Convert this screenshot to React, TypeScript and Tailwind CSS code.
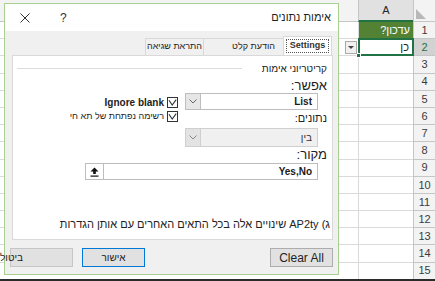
import React from 'react'

const rowNums = Array.from({ length: 15 }, (_, i) => i + 1)

function CheckBox() {
  return (
    <svg width="11" height="11" viewBox="0 0 11 11" className="shrink-0">
      <rect x="0.5" y="0.5" width="10" height="10" fill="#fff" stroke="#333" />
      <path d="M2 3.2 L5.2 8 L9.2 2.6" fill="none" stroke="#333" strokeWidth="1.1" />
    </svg>
  )
}

function Chevron({ color = '#666' }: { color?: string }) {
  return (
    <svg width="8" height="5" viewBox="0 0 8 5">
      <path d="M0.5 0.5 L4 4 L7.5 0.5" fill="none" stroke={color} strokeWidth="1" />
    </svg>
  )
}

export default function App() {
  return (
    <div
      dir="rtl"
      className="relative w-[435px] h-[281px] overflow-hidden bg-white border-b-2 border-[#2b2b2b] font-['Liberation_Sans','DejaVu_Sans',sans-serif] text-[#1a1a1a]"
    >
      {/* גיליון */}
      <div className="flex flex-col">
        <div className="flex h-[22px]">
          <div className="w-[22px] shrink-0 bg-[#f3f3f3] border-l border-b border-[#c6c6c6] flex items-end justify-end pb-[2px] pl-[2px]">
            <svg width="10" height="10" viewBox="0 0 10 10">
              <polygon points="0,0 0,10 10,10" fill="#b8b8b8" />
            </svg>
          </div>
          <div className="w-[55px] shrink-0 bg-[#e1e1e1] border-l border-[#c6c6c6] border-b-2 border-b-[#217346] flex items-center justify-center text-[11px] text-[#262626]">
            A
          </div>
          <div className="flex-1 bg-[#f3f3f3] border-b border-[#c6c6c6]" />
        </div>
        {rowNums.map(n => (
          <div key={n} className="flex h-[17.2px]">
            <div
              className={`w-[22px] shrink-0 border-l border-b border-[#c6c6c6] flex items-center justify-center text-[11px] ${
                n === 2 ? 'bg-[#d2d2d2] text-[#217346]' : 'bg-[#f3f3f3] text-[#3b3b3b]'
              }`}
            >
              {n}
            </div>
            {n === 1 ? (
              <div className="w-[55px] shrink-0 bg-[#548235] border-l border-b border-[#dadada] flex items-center pr-[3px] text-[11px] text-white">
                עדכון?
              </div>
            ) : n === 2 ? (
              <div className="relative w-[55px] shrink-0 border-l border-b border-[#dadada] flex items-center pr-[4px] text-[11px]">
                כן
                <div className="absolute -inset-[1px] border-2 border-[#217346]" />
                <div className="absolute -bottom-[3px] -left-[3px] w-[5px] h-[5px] bg-[#217346] border border-white" />
                <div className="absolute top-[2px] right-[calc(100%+2px)] w-[12px] h-[13px] bg-[#f0f0f0] border border-[#ababab] flex items-center justify-center">
                  <svg width="6" height="3" viewBox="0 0 6 3">
                    <polygon points="0,0 6,0 3,3" fill="#444" />
                  </svg>
                </div>
              </div>
            ) : (
              <div className="w-[55px] shrink-0 border-l border-b border-[#dadada]" />
            )}
            <div className="flex-1 border-b border-[#dadada]" />
          </div>
        ))}
      </div>

      {/* חלון אימות נתונים */}
      <div className="absolute left-[4px] top-[3px] w-[335px] h-[272px] border border-[#a9d08e] bg-[#f0f0f0] flex flex-col">
        <div className="h-[27px] shrink-0 bg-white flex items-center pr-[7px] pl-[15px]">
          <span className="text-[11px] text-[#222]">אימות נתונים</span>
          <span className="mr-auto ml-[30px] text-[12px] text-[#333]">?</span>
          <svg width="10" height="10" viewBox="0 0 10 10">
            <path d="M0.5 0.5 L9.5 9.5 M9.5 0.5 L0.5 9.5" stroke="#333" strokeWidth="1" />
          </svg>
        </div>

        <div className="h-[24px] shrink-0 flex items-end pr-[6px]">
          <div className="w-[49px] h-[19px] bg-white border border-b-0 border-[#d9d9d9] flex items-center justify-center p-[2px]">
            <span className="w-full h-full border border-dotted border-[#555] flex items-center justify-center text-[9px] font-bold text-[#333]">
              Settings
            </span>
          </div>
          <div className="w-[80px] h-[17px] border-t border-l border-[#d9d9d9] flex items-center pr-[8px] text-[9px] text-[#222]">
            הודעת קלט
          </div>
          <div className="w-[58px] h-[17px] border-t border-l border-[#d9d9d9] flex items-center justify-center text-[9px] text-[#222]">
            התראת שגיאה
          </div>
        </div>

        <div className="h-[185px] shrink-0 mr-[5px] ml-[7px] bg-white border border-[#d9d9d9] flex flex-col pt-[6px] pr-[5px] pl-[4px]">
          <div className="flex items-center h-[12px]">
            <span className="text-[10px] text-[#222]">קריטריוני אימות</span>
            <div className="flex-1 h-px bg-[#dcdcdc] mr-[20px]" />
          </div>

          <div className="flex gap-[7px] mt-[5px]">
            <div className="w-[142px] shrink-0 flex flex-col">
              <div className="h-[14px] leading-[14px] text-[13px] text-[#222]">אפשר:</div>
              <div className="mr-[9px] h-[17px] bg-white border border-[#bdbdbd] flex items-center">
                <span className="pr-[5px] text-[10px] font-semibold">List</span>
                <div className="mr-auto w-[15px] h-full bg-[#e6e6e6] border-r border-[#bdbdbd] flex items-center justify-center">
                  <Chevron />
                </div>
              </div>
              <div className="h-[17px] flex items-end pb-[1px] text-[11px] text-[#222]">נתונים:</div>
              <div className="mr-[9px] mt-[1px] h-[19px] bg-[#f0f0f0] border border-[#cfcfcf] flex items-center">
                <span className="pr-[5px] text-[10px] text-[#333]">בין</span>
                <div className="mr-auto w-[15px] h-full bg-[#e3e3e3] border-r border-[#cfcfcf] flex items-center justify-center">
                  <Chevron color="#888" />
                </div>
              </div>
            </div>
            <div className="mt-[17px] flex flex-col gap-[1px]">
              <div className="h-[13px] flex items-center gap-[3px]">
                <CheckBox />
                <span className="text-[10px] font-bold text-[#222]">Ignore blank</span>
              </div>
              <div className="h-[13px] flex items-center gap-[3px]">
                <CheckBox />
                <span className="text-[9px] text-[#222]">רשימה נפתחת של תא חי</span>
              </div>
            </div>
          </div>

          <div className="h-[16px] leading-[16px] text-[13px] text-[#222]">מקור:</div>
          <div className="mr-[9px] w-[233px] h-[17px] bg-white border border-[#bdbdbd] flex items-center">
            <span className="pr-[5px] text-[10px] font-semibold">Yes,No</span>
            <div className="mr-auto w-[18px] h-full bg-white border-r border-[#bdbdbd] flex items-center justify-center">
              <svg width="9" height="10" viewBox="0 0 9 10">
                <path d="M4.5 0.5 L8.5 4.5 L5.8 4.5 L5.8 7 L3.2 7 L3.2 4.5 L0.5 4.5 Z" fill="#111" />
                <rect x="0.5" y="8.5" width="8" height="1.2" fill="#111" />
              </svg>
            </div>
          </div>

          <div className="mt-auto mb-[7px] -mr-[3px] whitespace-nowrap text-[11px] text-[#222]">
            ג) AP2ty שינויים אלה בכל התאים האחרים עם אותן הגדרות
          </div>
        </div>

        <div className="flex-1 flex items-start justify-between pt-[8px] pr-[5px] pl-[5px]">
          <button className="w-[63px] h-[19px] bg-[#e1e1e1] border border-[#adadad] flex items-center justify-center text-[12px] text-[#222]">
            Clear All
          </button>
          <div className="flex gap-[9px]">
            <button className="w-[63px] h-[19px] bg-[#e1e1e1] border border-[#0078d7] flex items-center justify-center text-[10px] text-[#222]">
              אישור
            </button>
            <button className="w-[63px] h-[19px] bg-[#e1e1e1] border border-[#c6c6c6] flex items-center justify-end text-[10px] text-[#222]">
              <span className="-ml-[11px]">ביטול</span>
            </button>
          </div>
        </div>
      </div>
    </div>
  )
}
